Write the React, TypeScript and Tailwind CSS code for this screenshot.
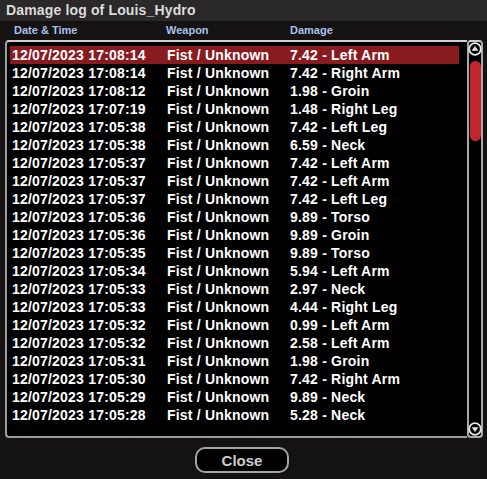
const rows: [string, string, string][] = [
  ["12/07/2023 17:08:14", "Fist / Unknown", "7.42 - Left Arm"],
  ["12/07/2023 17:08:14", "Fist / Unknown", "7.42 - Right Arm"],
  ["12/07/2023 17:08:12", "Fist / Unknown", "1.98 - Groin"],
  ["12/07/2023 17:07:19", "Fist / Unknown", "1.48 - Right Leg"],
  ["12/07/2023 17:05:38", "Fist / Unknown", "7.42 - Left Leg"],
  ["12/07/2023 17:05:38", "Fist / Unknown", "6.59 - Neck"],
  ["12/07/2023 17:05:37", "Fist / Unknown", "7.42 - Left Arm"],
  ["12/07/2023 17:05:37", "Fist / Unknown", "7.42 - Left Arm"],
  ["12/07/2023 17:05:37", "Fist / Unknown", "7.42 - Left Leg"],
  ["12/07/2023 17:05:36", "Fist / Unknown", "9.89 - Torso"],
  ["12/07/2023 17:05:36", "Fist / Unknown", "9.89 - Groin"],
  ["12/07/2023 17:05:35", "Fist / Unknown", "9.89 - Torso"],
  ["12/07/2023 17:05:34", "Fist / Unknown", "5.94 - Left Arm"],
  ["12/07/2023 17:05:33", "Fist / Unknown", "2.97 - Neck"],
  ["12/07/2023 17:05:33", "Fist / Unknown", "4.44 - Right Leg"],
  ["12/07/2023 17:05:32", "Fist / Unknown", "0.99 - Left Arm"],
  ["12/07/2023 17:05:32", "Fist / Unknown", "2.58 - Left Arm"],
  ["12/07/2023 17:05:31", "Fist / Unknown", "1.98 - Groin"],
  ["12/07/2023 17:05:30", "Fist / Unknown", "7.42 - Right Arm"],
  ["12/07/2023 17:05:29", "Fist / Unknown", "9.89 - Neck"],
  ["12/07/2023 17:05:28", "Fist / Unknown", "5.28 - Neck"],
];

function ArrowButton({ down }: { down?: boolean }) {
  return (
    <svg width="14" height="14" viewBox="0 0 14 14">
      <circle cx="7" cy="7" r="5.8" fill="#000" stroke="#e6e6e6" strokeWidth="1.8" />
      {down ? (
        <polygon points="3.6,5.2 10.4,5.2 7,10" fill="#e6e6e6" />
      ) : (
        <polygon points="3.6,8.8 10.4,8.8 7,4" fill="#e6e6e6" />
      )}
    </svg>
  );
}

export default function App() {
  return (
    <div
      className="w-[487px] h-[479px] bg-[#141212] flex flex-col overflow-hidden"
      style={{ fontFamily: '"Liberation Sans", Arial, sans-serif' }}
    >
      <div className="h-[21px] bg-[#2a2828] px-[6px] text-[14px] leading-[21px] font-bold text-[#dcdcdc] tracking-[0.15px]">
        Damage log of Louis_Hydro
      </div>

      <div className="h-[19px] relative text-[11px] leading-[19px] font-bold text-[#a9c1e8]">
        <span className="absolute left-[14px]">Date &amp; Time</span>
        <span className="absolute left-[166px]">Weapon</span>
        <span className="absolute left-[290px]">Damage</span>
      </div>

      <div className="flex ml-[5px] mr-[4px] h-[398px]">
        <div className="flex-1 bg-black border-2 border-r-0 border-[#9c9c9c] border-t-[#cfcfcf] rounded-l-[4px] pt-[4px] pl-[3px] pr-[8px]">
          {rows.map(([date, weapon, dmg], i) => (
            <div
              key={i}
              className={`flex h-[18px] items-center text-[14px] font-bold text-white whitespace-nowrap tracking-[0.2px] ${
                i === 0 ? "bg-[#881b1f]" : ""
              }`}
            >
              <span className="w-[157px] pl-[2px]">{date}</span>
              <span className="w-[123px]">{weapon}</span>
              <span>{dmg}</span>
            </div>
          ))}
        </div>
        <div className="w-[16px] bg-black border-2 border-[#a8a8a8] border-t-[#cfcfcf] rounded-[4px] flex flex-col items-center">
          <ArrowButton />
          <div className="w-[11px] h-[80px] mt-[5px] rounded-full bg-[#c0262d]" />
          <div className="flex-1" />
          <ArrowButton down />
        </div>
      </div>

      <div className="flex justify-center mt-[9px] pr-[3px]">
        <button className="w-[94px] h-[26px] rounded-[10px] border-2 border-[#a4a4a4] bg-black text-[15px] font-bold text-[#cccccc] leading-none">
          Close
        </button>
      </div>
    </div>
  );
}
